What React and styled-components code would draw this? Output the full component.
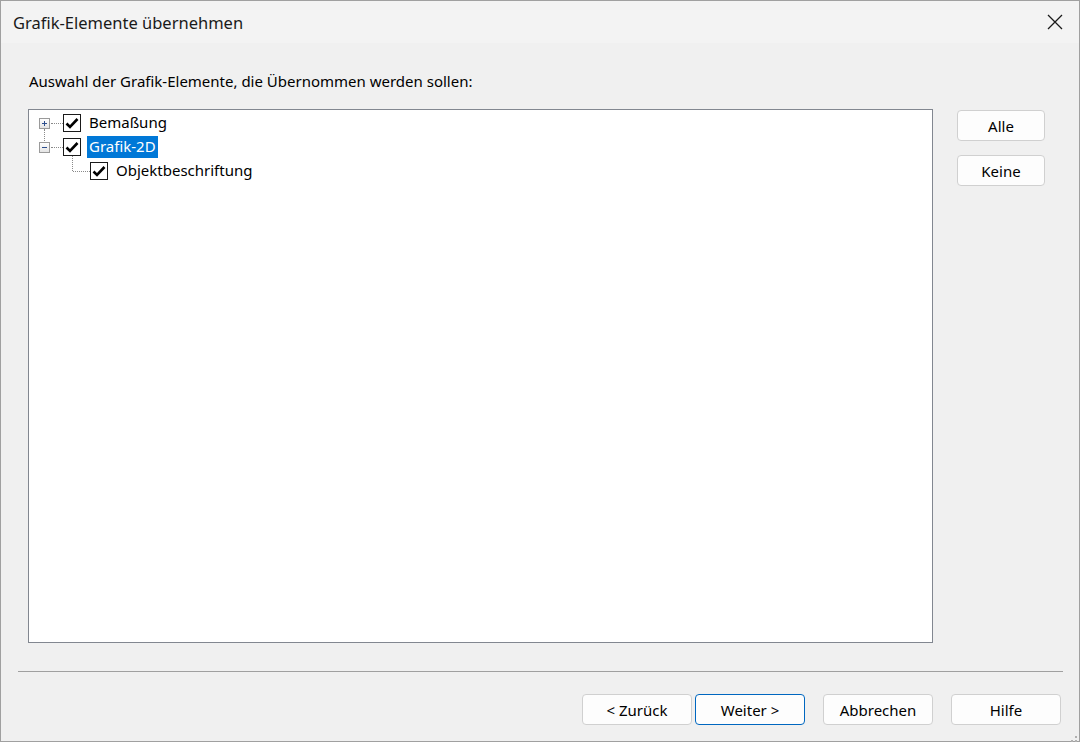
import styled, { createGlobalStyle } from "styled-components";

const Global = createGlobalStyle`
  html, body { margin: 0; padding: 0; background: #f0f0f0; }
  body { font-family: "Segoe UI", "Noto Sans", "Liberation Sans", sans-serif; }
`

const Window = styled.div`
  width: 1080px;
  height: 742px;
  box-sizing: border-box;
  border: 1px solid #a0a0a0;
  background: #f0f0f0;
  display: flex;
  flex-direction: column;
  position: relative;
  color: #000;
`
const TitleBar = styled.div`
  height: 42px;
  background: #f3f3f3;
  display: flex;
  align-items: center;
  justify-content: space-between;
  padding: 0 16px 0 12px;
`
const Title = styled.div`
  font-size: 16.5px;
  color: #1a1a1a;
`
const Close = styled.div`
  width: 16px;
  height: 16px;
  display: flex;
`
const Body = styled.div`
  flex: 1;
  display: flex;
  flex-direction: column;
  padding: 0 17px 0 27px;
`
const Prompt = styled.div`
  font-size: 15px;
  margin-top: 28px;
  height: 20px;
  line-height: 20px;
  padding-left: 1px;
`
const Main = styled.div`
  display: flex;
  margin-top: 18px;
  gap: 24px;
`
const TreeBox = styled.div`
  width: 905px;
  height: 534px;
  box-sizing: border-box;
  border: 1px solid #828790;
  background: #fff;
  padding-top: 1px;
  padding-left: 10px;
`
const Row = styled.div`
  height: 24px;
  display: flex;
  align-items: center;
  padding-left: ${p => p.$indent ? 51 : 0}px;
  position: relative;
`
const Expander = styled.div`
  width: 11px;
  height: 11px;
  box-sizing: border-box;
  border: 1px solid #9a9a9a;
  background: linear-gradient(#fff, #e4e4e4);
  position: relative;
  margin-right: 13px;
  &::before {
    content: "";
    position: absolute;
    left: 2px; right: 2px; top: 4px; height: 1px;
    background: #2d4f8e;
  }
  &::after {
    content: "";
    display: ${p => p.$open ? "none" : "block"};
    position: absolute;
    top: 2px; bottom: 2px; left: 4px; width: 1px;
    background: #2d4f8e;
  }
`
const HDots = styled.div`
  position: absolute;
  left: ${p => p.$left}px;
  width: ${p => p.$width}px;
  top: 12px;
  border-top: 1px dotted #8a8a8a;
`
const VDots = styled.div`
  position: absolute;
  left: ${p => p.$left}px;
  top: ${p => p.$top}px;
  height: ${p => p.$height}px;
  border-left: 1px dotted #8a8a8a;
`
const Check = styled.div`
  width: 18px;
  height: 18px;
  box-sizing: border-box;
  border: 1px solid #1a1a1a;
  background: #fff;
  display: flex;
  align-items: center;
  justify-content: center;
  margin-right: 6px;
`
const Label = styled.div`
  font-size: 15px;
  height: 22px;
  line-height: 21px;
  padding: 0 2px;
  background: ${p => p.$selected ? "#0078d7" : "transparent"};
  color: ${p => p.$selected ? "#fff" : "#000"};
`
const SideButtons = styled.div`
  display: flex;
  flex-direction: column;
  gap: 14px;
  padding-top: 1px;
`
const Button = styled.button`
  width: ${p => p.$w || 110}px;
  height: 31px;
  box-sizing: border-box;
  border: 1px solid ${p => p.$default ? "#0067c0" : "#d0d0d0"};
  border-radius: 4px;
  background: #fdfdfd;
  font-family: inherit;
  font-size: 15px;
  color: #000;
  padding: 0;
`
const Separator = styled.div`
  height: 1px;
  background: #a0a0a0;
  margin: 28px 0 0 -10px;
  width: 1045px;
`
const Footer = styled.div`
  display: flex;
  justify-content: flex-end;
  margin-top: 22px;
  padding-right: 1px;
`
const Gap = styled.div`
  width: ${p => p.$w}px;
`
const Grip = styled.div`
  position: absolute;
  right: 2px;
  bottom: 2px;
  width: 10px;
  height: 10px;
`

function Tick() {
  return (
    <svg width="14" height="12" viewBox="0 0 14 12">
      <path d="M1.5 6.5 L5 10 L12.5 2" fill="none" stroke="#000" strokeWidth="2.6" />
    </svg>
  )
}

export default function App() {
  return <Window>
    <Global />
    <TitleBar>
      <Title>Grafik-Elemente übernehmen</Title>
      <Close>
        <svg width="16" height="16" viewBox="0 0 16 16">
          <path d="M1 1 L15 15 M15 1 L1 15" stroke="#1a1a1a" strokeWidth="1.3" />
        </svg>
      </Close>
    </TitleBar>
    <Body>
      <Prompt>Auswahl der Grafik-Elemente, die Übernommen werden sollen:</Prompt>
      <Main>
        <TreeBox>
          <Row>
            <Expander />
            <HDots $left={12} $width={12} />
            <VDots $left={5} $top={18} $height={12} />
            <Check><Tick /></Check>
            <Label>Bemaßung</Label>
          </Row>
          <Row>
            <Expander $open />
            <HDots $left={12} $width={12} />
            <VDots $left={33} $top={21} $height={15} />
            <Check><Tick /></Check>
            <Label $selected>Grafik-2D</Label>
          </Row>
          <Row $indent>
            <HDots $left={34} $width={17} />
            <Check><Tick /></Check>
            <Label>Objektbeschriftung</Label>
          </Row>
        </TreeBox>
        <SideButtons>
          <Button $w={88}>Alle</Button>
          <Button $w={88}>Keine</Button>
        </SideButtons>
      </Main>
      <Separator />
      <Footer>
        <Button>&lt; Zurück</Button>
        <Gap $w={3} />
        <Button $default>Weiter &gt;</Button>
        <Gap $w={18} />
        <Button>Abbrechen</Button>
        <Gap $w={18} />
        <Button>Hilfe</Button>
      </Footer>
    </Body>
    <Grip>
      <svg width="10" height="10" viewBox="0 0 10 10">
        <g fill="#b0b0b0">
          <rect x="8" y="0" width="2" height="2" />
          <rect x="4" y="4" width="2" height="2" />
          <rect x="8" y="4" width="2" height="2" />
          <rect x="0" y="8" width="2" height="2" />
          <rect x="4" y="8" width="2" height="2" />
          <rect x="8" y="8" width="2" height="2" />
        </g>
      </svg>
    </Grip>
  </Window>
}
